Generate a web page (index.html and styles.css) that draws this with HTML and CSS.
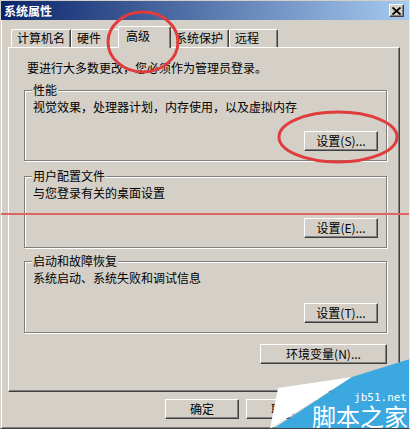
FILE: index.html
```html
<!DOCTYPE html>
<html lang="zh-CN">

<head>
    <meta charset="UTF-8">
    <meta name="viewport" content="width=device-width, initial-scale=1.0">
    <title>系统属性</title>
    <link rel="stylesheet" href="styles.css">
</head>

<body>
    <div class="window">
        <div class="titlebar">
            <span class="title">系统属性</span>
            <button class="close-button" aria-label="关闭">
                <svg width="9" height="8" viewBox="0 0 9 8">
                    <path d="M0.5 0.5 L8.5 7.5 M8.5 0.5 L0.5 7.5" stroke="#000" stroke-width="1.8" fill="none" />
                </svg>
            </button>
        </div>

        <div class="tabs">
            <div class="tab">计算机名</div>
            <div class="tab">硬件</div>
            <div class="tab active">高级</div>
            <div class="tab">系统保护</div>
            <div class="tab">远程</div>
        </div>

        <div class="panel">
            <p class="intro">要进行大多数更改，您必须作为管理员登录。</p>

            <div class="group group-perf">
                <span class="legend">性能</span>
                <p class="desc">视觉效果，处理器计划，内存使用，以及虚拟内存</p>
                <button class="btn">设置(S)...</button>
            </div>

            <div class="group group-profile">
                <span class="legend">用户配置文件</span>
                <p class="desc">与您登录有关的桌面设置</p>
                <button class="btn">设置(E)...</button>
            </div>

            <div class="group group-startup">
                <span class="legend">启动和故障恢复</span>
                <p class="desc">系统启动、系统失败和调试信息</p>
                <button class="btn">设置(T)...</button>
            </div>

            <button class="btn btn-wide">环境变量(N)...</button>
        </div>

        <div class="dialog-actions">
            <button class="btn">确定</button>
            <button class="btn">取消</button>
            <button class="btn">应用(A)</button>
        </div>

        <!-- 红色标注 -->
        <svg class="marks" width="410" height="429" viewBox="0 0 410 429">
            <ellipse cx="143" cy="42" rx="35" ry="30" fill="none" stroke="#e03c3c" stroke-width="3" />
            <ellipse cx="338" cy="137" rx="59" ry="25" fill="none" stroke="#e03c3c" stroke-width="3" />
            <rect x="0" y="213" width="410" height="2" fill="#e06464" />
        </svg>

        <!-- 水印 -->
        <div class="watermark">
            <svg class="watermark-bg" width="140" height="73" viewBox="0 0 140 73">
                <polygon points="8,32 82,21 0,73" fill="#fff" />
                <polygon points="140,3 82,21 3,73 140,73" fill="#3ba8df" />
            </svg>
            <span class="wm-site">jb51.net</span>
            <span class="wm-name">脚本之家</span>
        </div>
    </div>
</body>

</html>
```

FILE: styles.css
```css
body {
    margin: 0;
    padding: 0;
    background: #d4d0c8;
    font-family: "Noto Sans CJK SC", "Liberation Sans", sans-serif;
    font-size: 12px;
    color: #000;
}

.window {
    position: relative;
    width: 410px;
    height: 429px;
    box-sizing: border-box;
    background: #d4d0c8;
    border-top: 1px solid #d4d0c8;
    border-left: 1px solid #d4d0c8;
    border-right: 1px solid #ecebe6;
    border-bottom: 1px solid #404040;
    box-shadow: inset 1px 0 #fff, inset 0 -1px #808080;
    display: flex;
    flex-direction: column;
    overflow: hidden;
}

/* 标题栏 */
.titlebar {
    height: 19px;
    display: flex;
    align-items: center;
    justify-content: space-between;
    padding: 0 5px 0 3px;
    background: linear-gradient(to right, #0a246a, #a6caf0);
}

.title {
    color: #fff;
    font-weight: bold;
    font-size: 12px;
    line-height: 12px;
}

.close-button {
    width: 15px;
    height: 13px;
    padding: 0;
    box-sizing: border-box;
    display: flex;
    align-items: center;
    justify-content: center;
    background: #d4d0c8;
    border: 1px solid;
    border-color: #fff #404040 #404040 #fff;
    box-shadow: inset -1px -1px #808080;
}

/* 选项卡 */
.tabs {
    display: flex;
    align-items: flex-end;
    height: 21px;
    margin-top: 6px;
    padding-left: 10px;
}

.tab {
    position: relative;
    box-sizing: border-box;
    min-width: 49px;
    height: 18px;
    padding: 0 5px;
    line-height: 16px;
    border-top: 1px solid #fff;
    border-left: 1px solid #fff;
    border-right: 1px solid #404040;
    border-radius: 2px 2px 0 0;
    box-shadow: inset -1px 0 #808080;
    white-space: nowrap;
}

.tab.active {
    z-index: 2;
    min-width: 53px;
    height: 22px;
    margin: 0 -2px -1px;
    padding: 3px 7px 0;
    line-height: 12px;
    background: #d4d0c8;
}

/* 面板 */
.panel {
    box-sizing: border-box;
    width: 392px;
    height: 345px;
    margin-left: 7px;
    padding: 14px 12px 0 15px;
    border-top: 1px solid #fff;
    border-left: 1px solid #fff;
    border-right: 1px solid #404040;
    border-bottom: 1px solid #404040;
    box-shadow: inset -1px -1px #808080;
    display: flex;
    flex-direction: column;
}

.intro {
    margin: 0 0 16px 3px;
    line-height: 12px;
}

.group {
    position: relative;
    box-sizing: border-box;
    height: 72px;
    padding: 10px 8px 9px;
    border: 1px solid #808080;
    box-shadow: inset 1px 1px #fff, 1px 1px #fff;
    display: flex;
    flex-direction: column;
}

.group-perf {
    height: 71px;
}

.group-profile {
    margin-top: 15px;
}

.group-startup {
    margin-top: 13px;
}

.legend {
    position: absolute;
    top: -7px;
    left: 7px;
    padding: 0 1px;
    line-height: 12px;
    background: #d4d0c8;
}

.desc {
    margin: 0;
    line-height: 12px;
}

.btn {
    box-sizing: border-box;
    width: 74px;
    height: 20px;
    padding: 0;
    font-family: inherit;
    font-size: 12px;
    line-height: 12px;
    color: #000;
    background: #d4d0c8;
    border: 1px solid;
    border-color: #fff #404040 #404040 #fff;
    box-shadow: inset -1px -1px #808080;
    cursor: pointer;
}

.group .btn {
    margin-top: auto;
    align-self: flex-end;
}

.btn-wide {
    width: 127px;
    margin-top: 11px;
    align-self: flex-end;
}

.dialog-actions {
    display: flex;
    justify-content: flex-end;
    gap: 7px;
    margin-top: 7px;
    padding-right: 8px;
}

/* 标注与水印 */
.marks {
    position: absolute;
    top: -1px;
    left: -1px;
    pointer-events: none;
}

.watermark {
    position: absolute;
    right: -1px;
    bottom: -1px;
    width: 140px;
    height: 73px;
}

.watermark-bg {
    position: absolute;
    top: 0;
    left: 0;
}

.wm-site {
    position: absolute;
    right: 3px;
    top: 36px;
    font-family: "DejaVu Sans Mono", monospace;
    font-size: 11px;
    line-height: 11px;
    color: #fff;
}

.wm-name {
    position: absolute;
    right: 2px;
    top: 48px;
    font-size: 24px;
    line-height: 24px;
    color: #fff;
}
```
